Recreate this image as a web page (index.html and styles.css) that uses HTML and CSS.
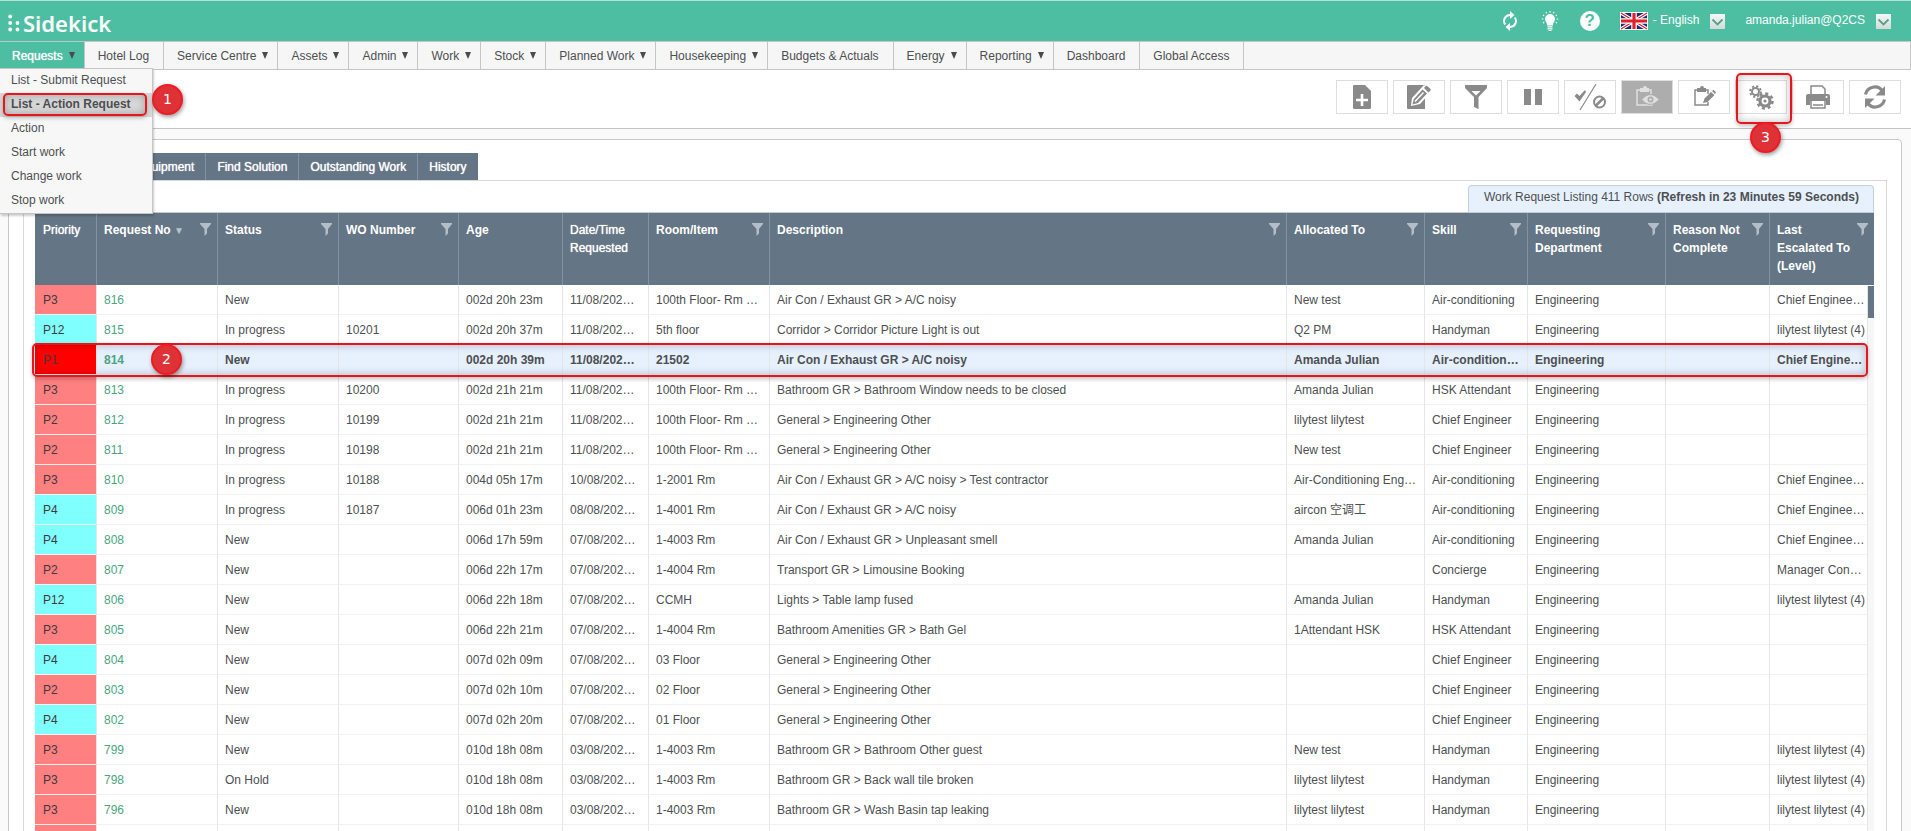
FILE: index.html
```html
<!DOCTYPE html>
<html lang="en">
<head>
    <meta charset="UTF-8">
    <meta name="viewport" content="width=device-width, initial-scale=1.0">
    <title>Sidekick</title>
    <link rel="stylesheet" href="styles.css">
</head>
<body>
    <!-- Shared icons -->
    <svg class="sprite" aria-hidden="true">
        <symbol id="i-filter" viewBox="0 0 11 13"><path d="M0 0h11v1L7 6v4.500L4.500 13V6L0 1z"/></symbol>
        <symbol id="i-chevron" viewBox="0 0 15 15"><path d="M2.500 5.500l5 5 5-5" fill="none" stroke="#5a9f8c" stroke-width="1.800"/></symbol>
    </svg>

    <header class="topbar">
        <a class="logo" href="#">
            <svg width="12" height="18" viewBox="0 0 12 18" fill="#fff"><circle cx="2.200" cy="2.500" r="1.900"/><circle cx="2.200" cy="9" r="1.900"/><circle cx="2.200" cy="15.500" r="1.900"/><circle cx="9.500" cy="9" r="1.900"/><circle cx="9.500" cy="15.500" r="1.900"/></svg>
            <span>Sidekick</span>
        </a>
        <div class="top-tools">
            <button class="top-icon" aria-label="Sync">
                <svg width="16" height="20" viewBox="0 0 16 20"><g fill="none" stroke="#fff" stroke-width="2"><path d="M9 4H8a6 6 0 0 0-4.800 9.500"/><path d="M7 16h1a6 6 0 0 0 4.800-9.500"/></g><path d="M8 0l4.500 4L8 8zM8 12v8l-4.500-4z" fill="#fff"/></svg>
            </button>
            <button class="top-icon" aria-label="Tips">
                <svg width="18" height="20" viewBox="0 0 18 20"><path d="M9 3a5 5 0 0 1 5 5c0 2.500-2 3.500-2.200 6.500H6.200C6 11.500 4 10.500 4 8a5 5 0 0 1 5-5zM6.500 15.300h5v1.200h-5zM6.500 17.200h5v1.200h-5zM7.500 19h3v1h-3z" fill="#fff"/><g stroke="#fff" stroke-width="1.200"><path d="M9 0v1.500M5 1l.7 1.300M13 1l-.7 1.300M2 4l1.200.8M16 4l-1.200.8M.8 8h1.500M15.700 8h1.500M2 12l1.200-.8M16 12l-1.200-.8"/></g></svg>
            </button>
            <button class="top-icon help" aria-label="Help">?</button>
            <button class="menu-button" aria-label="Language">
                <svg class="flag" width="28" height="18" viewBox="0 0 28 18"><path fill="#fff" d="M0 0h28v18H0z"/><path fill="#1d2f6f" d="M1 1h26v16H1z"/><path d="M1 1l26 16M27 1L1 17" stroke="#fff" stroke-width="3.400"/><path d="M1 1l26 16M27 1L1 17" stroke="#d8202f" stroke-width="1.200"/><path d="M14 1v16M1 9h26" stroke="#fff" stroke-width="5.500"/><path d="M14 1v16M1 9h26" stroke="#e0202c" stroke-width="3.200"/></svg>
                <span>- English</span>
                <svg class="chevron" width="15" height="15"><use href="#i-chevron"/></svg>
            </button>
            <button class="menu-button user">
                <span>amanda.julian@Q2CS</span>
                <svg class="chevron" width="15" height="15"><use href="#i-chevron"/></svg>
            </button>
        </div>
    </header>

    <nav class="mainnav">
        <div class="nav-item active">
            <a class="has-menu" href="#">Requests</a>
            <ul class="dropdown">
                <li><a href="#">List - Submit Request</a></li>
                <li class="current"><a href="#">List - Action Request</a><span class="marker"></span><span class="step">1</span></li>
                <li><a href="#">Action</a></li>
                <li><a href="#">Start work</a></li>
                <li><a href="#">Change work</a></li>
                <li><a href="#">Stop work</a></li>
            </ul>
        </div>
        <div class="nav-item"><a href="#">Hotel Log</a></div>
        <div class="nav-item"><a class="has-menu" href="#">Service Centre</a></div>
        <div class="nav-item"><a class="has-menu" href="#">Assets</a></div>
        <div class="nav-item"><a class="has-menu" href="#">Admin</a></div>
        <div class="nav-item"><a class="has-menu" href="#">Work</a></div>
        <div class="nav-item"><a class="has-menu" href="#">Stock</a></div>
        <div class="nav-item"><a class="has-menu" href="#">Planned Work</a></div>
        <div class="nav-item"><a class="has-menu" href="#">Housekeeping</a></div>
        <div class="nav-item"><a href="#">Budgets &amp; Actuals</a></div>
        <div class="nav-item"><a class="has-menu" href="#">Energy</a></div>
        <div class="nav-item"><a class="has-menu" href="#">Reporting</a></div>
        <div class="nav-item"><a href="#">Dashboard</a></div>
        <div class="nav-item"><a href="#">Global Access</a></div>
    </nav>

    <div class="toolbar">
        <button class="tool" aria-label="New request">
            <svg width="18" height="24" viewBox="0 0 18 24"><path d="M1 0h11l6 6v16.500a1.500 1.500 0 0 1-1.500 1.500h-15A1.500 1.500 0 0 1 0 22.500V1a1 1 0 0 1 1-1z"/><path d="M9 9v12M3 15h12" stroke="#fff" stroke-width="2.600"/></svg>
        </button>
        <button class="tool" aria-label="Edit request">
            <svg width="24" height="24" viewBox="0 0 24 24"><path d="M1 0h17v24H1a1 1 0 0 1-1-1V1a1 1 0 0 1 1-1z"/><path d="M4 21l1-8L17 0l8 6-12 13z" fill="#fff"/><path d="M5.500 19.500l1.200-5.300L15.500 4.500l4.500 4-9 9.500zM17 3l1.500-1.700a1.500 1.500 0 0 1 2 0l2.800 2.500a1.500 1.500 0 0 1 0 2L21.500 7.500z"/><path d="M8 16.500l8.500-9" stroke="#fff" stroke-width="1.500"/></svg>
        </button>
        <button class="tool" aria-label="Filter">
            <svg width="24" height="24" viewBox="0 0 24 24"><path d="M1 0h22v3l-8.500 9v12L10 22V12L1 3z"/><path d="M7.500 6h9L12 10.500z" fill="#fff"/></svg>
        </button>
        <button class="tool" aria-label="Pause">
            <svg width="18" height="16" viewBox="0 0 18 16"><path d="M0 0h7v16H0zM11 0h7v16h-7z"/></svg>
        </button>
        <button class="tool" aria-label="Complete or cancel">
            <svg width="34" height="28" viewBox="0 0 34 28"><path d="M1.500 13l2.500-2.500 2.500 2.500L12 7l1 2-6.500 9.500z"/><path d="M23 1L7 27" stroke="#8a8a8a" stroke-width="1.200"/><circle cx="26.500" cy="19" r="5.500" fill="none" stroke="#8a8a8a" stroke-width="2"/><path d="M22.500 23l8-8" stroke="#8a8a8a" stroke-width="2.500"/></svg>
        </button>
        <button class="tool off" aria-label="View job" disabled>
            <svg width="24" height="22" viewBox="0 0 24 22"><path d="M6 4H2v15h15v-3M13 4h3v4" fill="none" stroke="#e0e0e0" stroke-width="1.500"/><path d="M5 2h3a2 2 0 0 1 4 0h2v4H5z" fill="#e0e0e0"/><path d="M7 13.500c4.500-6.500 12-6.500 17 0-5 6.500-12.500 6.500-17 0z" fill="#e0e0e0" stroke="#adadad"/><circle cx="15.500" cy="13.500" r="3" fill="#adadad"/><circle cx="15.500" cy="13.500" r="1.300" fill="#e0e0e0"/></svg>
        </button>
        <button class="tool" aria-label="Edit job">
            <svg width="24" height="22" viewBox="0 0 24 22"><path d="M6 4H3v15h13v-3M13 4h3v4" fill="none" stroke="#8a8a8a" stroke-width="1.500"/><path d="M5 2h3a2 2 0 0 1 4 0h2v4H5zM11 17l1.500-4.500L19 6l3.500 3L15.500 16zM20 5l1.500-1.300 2.500 2.500L23 8z"/></svg>
        </button>
        <button class="tool" aria-label="Settings">
            <svg width="26" height="26" viewBox="0 0 26 26" fill="none" stroke="#8a8a8a"><circle cx="7.500" cy="7.500" r="3.500" stroke-width="2"/><circle cx="7.500" cy="7.500" r="5.300" stroke-width="2" stroke-dasharray="2.160 2"/><circle cx="17" cy="17" r="5" stroke-width="3.200"/><circle cx="17" cy="17" r="7.500" stroke-width="2.600" stroke-dasharray="3 2.890"/><circle cx="17" cy="17" r="1.600" stroke="none" fill="#8a8a8a"/></svg>
            <span class="marker"></span><span class="step">3</span>
        </button>
        <button class="tool" aria-label="Print">
            <svg width="24" height="24" viewBox="0 0 24 24"><path d="M5 9V1h11l3 3v5" fill="none" stroke="#8a8a8a" stroke-width="1.500"/><path d="M2 9h20a2 2 0 0 1 2 2v9h-4v-4H4v4H0v-9a2 2 0 0 1 2-2z"/><path d="M5 16v7h14v-7" fill="none" stroke="#8a8a8a" stroke-width="1.500"/><path d="M7 20h10" stroke="#8a8a8a" stroke-width="1.500"/><circle cx="20.500" cy="12" r="1" fill="#fff"/></svg>
        </button>
        <button class="tool" aria-label="Refresh">
            <svg width="24" height="24" viewBox="0 0 24 24"><path d="M2.500 9.500A9.500 9.500 0 0 1 19.500 6M21.500 14.500A9.500 9.500 0 0 1 4.500 18" fill="none" stroke="#8a8a8a" stroke-width="3.200"/><path d="M22 1v9.500h-9.500zM2 23v-9.500h9.500z"/></svg>
        </button>
    </div>

    <main class="workspace">
        <div class="tabs">
            <button class="tab">Equipment</button>
            <button class="tab">Find Solution</button>
            <button class="tab">Outstanding Work</button>
            <button class="tab">History</button>
        </div>
        <section class="tab-body">
            <p class="listing-note">Work Request Listing 411 Rows <b>(Refresh in 23 Minutes 59 Seconds)</b></p>
            <div class="grid-wrap">
                <table class="grid">
                    <colgroup>
                        <col class="w-priority"><col class="w-m"><col class="w-m"><col class="w-wo"><col class="w-s"><col class="w-date"><col class="w-m"><col><col class="w-l"><col class="w-skill"><col class="w-l"><col class="w-s"><col class="w-s">
                    </colgroup>
                    <thead>
                        <tr>
                            <th class="plain">Priority</th>
                            <th>Request No <span class="sort">▼</span><svg class="funnel"><use href="#i-filter"/></svg></th>
                            <th>Status<svg class="funnel"><use href="#i-filter"/></svg></th>
                            <th>WO Number<svg class="funnel"><use href="#i-filter"/></svg></th>
                            <th>Age</th>
                            <th class="plain">Date/Time Requested</th>
                            <th>Room/Item<svg class="funnel"><use href="#i-filter"/></svg></th>
                            <th>Description<svg class="funnel"><use href="#i-filter"/></svg></th>
                            <th>Allocated To<svg class="funnel"><use href="#i-filter"/></svg></th>
                            <th>Skill<svg class="funnel"><use href="#i-filter"/></svg></th>
                            <th>Requesting<br>Department<svg class="funnel"><use href="#i-filter"/></svg></th>
                            <th>Reason Not<br>Complete<svg class="funnel"><use href="#i-filter"/></svg></th>
                            <th>Last<br>Escalated To<br>(Level)<svg class="funnel"><use href="#i-filter"/></svg></th>
                        </tr>
                    </thead>
                    <tbody id="rows"></tbody>
                </table>
                <div class="scroll-track"><div class="scroll-thumb"></div></div>
            </div>
        </section>
    </main>

    <script src="app.js"></script>
</body>
</html>
```

FILE: styles.css
```css
* {
    box-sizing: border-box;
}
body {
    margin: 0;
    height: 100vh;
    overflow: hidden;
    background: #fafafa;
    color: #4d4f52;
    font-family: "Liberation Sans", Arial, "Noto Sans CJK SC", sans-serif;
    font-size: 12px;
    line-height: 18px;
}
a {
    color: inherit;
    text-decoration: none;
}
button {
    font: inherit;
    color: inherit;
    background: none;
    border: 0;
    padding: 0;
    cursor: pointer;
}
.sprite {
    position: absolute;
    width: 0;
    height: 0;
}

/* Top bar */
.topbar {
    display: flex;
    justify-content: space-between;
    height: 41px;
    padding: 0 20px 0 8px;
    border-top: 1px solid #b5e2d5;
    background: #4dbea2;
    color: #fff;
}
.logo {
    display: flex;
    align-items: center;
    gap: 3px;
    padding-top: 3px;
    font-family: "Noto Sans", sans-serif;
    font-size: 22px;
    font-weight: 600;
    line-height: 36px;
}
.top-tools {
    display: flex;
    align-items: center;
}
.top-icon {
    display: flex;
    align-items: center;
    justify-content: center;
    width: 20px;
    height: 20px;
    margin-right: 20px;
}
.help {
    border-radius: 50%;
    background: #fff;
    color: #4dbea2;
    font-size: 17px;
    font-weight: bold;
}
.menu-button {
    display: flex;
    align-items: center;
}
.menu-button span {
    padding-bottom: 2px;
}
.flag {
    margin-right: 5px;
}
.chevron {
    margin-left: 11px;
    background: linear-gradient(#f5f8f7, #cfdcd8);
}
.user {
    margin-left: 20px;
}

/* Main menu */
.mainnav {
    display: flex;
    height: 29px;
    border: 1px solid #c5c5c5;
    border-left: 0;
    background: #f6f6f6;
}
.nav-item {
    position: relative;
    border-right: 1px solid #c5c5c5;
}
.nav-item > a {
    display: flex;
    align-items: center;
    height: 27px;
    padding: 0 14px 0 13px;
}
.nav-item > .has-menu {
    padding-right: 9px;
}
.has-menu::after {
    content: "";
    margin-left: 6px;
    border: solid transparent;
    border-width: 7px 3px 0;
    border-top-color: #4a4a4a;
}
.nav-item.active > a {
    padding-left: 12px;
    background: #4dbea2;
    color: #fff;
    text-shadow: 0 0 1px #fff;
}
.dropdown {
    position: absolute;
    z-index: 5;
    top: 26px;
    left: 0;
    width: 153px;
    margin: 0;
    padding: 0;
    border: 1px solid #c5c5c5;
    border-left: 0;
    background: #f7f7f7;
    box-shadow: 1px 2px 2px rgba(0,0,0,0.2);
    list-style: none;
}
.dropdown li {
    position: relative;
    height: 24px;
    padding: 2px 0 0 11px;
}
.dropdown .current {
    background: #d8d8d8;
    font-weight: bold;
}

/* Numbered callouts */
.marker {
    position: absolute;
    z-index: 2;
    border: 2px solid #e8151c;
    border-radius: 5px;
    box-shadow: 0 2px 4px rgba(0,0,0,0.25), inset 0 0 8px rgba(0,0,0,0.25);
}
.step {
    position: absolute;
    z-index: 3;
    width: 31px;
    height: 31px;
    border: 2px solid #ed1c24;
    border-radius: 50%;
    background: #df3236;
    box-shadow: 1px 2px 4px rgba(0,0,0,0.4);
    color: #fff;
    font-family: "DejaVu Sans", sans-serif;
    font-size: 14px;
    font-weight: normal;
    line-height: 27px;
    text-align: center;
}
.dropdown .marker {
    inset: 0 5px 1px 3px;
}
.dropdown .step {
    top: -9px;
    left: 152px;
}

/* Toolbar */
.toolbar {
    display: flex;
    justify-content: flex-end;
    gap: 5px;
    padding: 10px 10px 14px;
    border-bottom: 1px solid #c4c4c4;
    background: #fff;
}
.tool {
    position: relative;
    display: flex;
    align-items: center;
    justify-content: center;
    width: 52px;
    height: 34px;
    border: 1px solid #dedede;
    background: #fff;
    fill: #8a8a8a;
}
.tool.off {
    background: #adadad;
}
.tool .marker {
    inset: -8px -6px -11px 0;
}
.tool .step {
    top: 41px;
    left: 14px;
}

/* Tabs and listing */
.workspace {
    margin: 10px 9px 0 8px;
    padding: 13px 14px 0;
    border: 1px solid #c9c9c9;
    border-radius: 4px;
    background: #fff;
}
.tabs {
    display: flex;
    padding-left: 103px;
}
.tab {
    height: 27px;
    padding: 0 11px;
    border-right: 1px solid #8492a0;
    background: #647585;
    color: #fff;
    text-shadow: 0 0 1px #fff;
}
.tab:last-child {
    border-right: 0;
}
.tab-body {
    padding: 4px 12px 0 11px;
    border: 1px solid #d8d8d8;
    border-bottom: 0;
}
.listing-note {
    width: fit-content;
    height: 27px;
    margin: 0 0 0 auto;
    padding: 2px 14px 0 15px;
    border: 1px solid #c3d0dc;
    border-bottom: 0;
    border-radius: 4px 4px 0 0;
    background: #e7f1fd;
}
.grid-wrap {
    position: relative;
    border-top: 1px solid #c3ccd4;
}
.grid {
    width: 100%;
    table-layout: fixed;
    border-collapse: separate;
    border-spacing: 0;
}
.w-priority { width: 62px; }
.w-m { width: 121px; }
.w-wo { width: 120px; }
.w-s { width: 104px; }
.w-date { width: 86px; }
.w-l { width: 138px; }
.w-skill { width: 103px; }
.grid th {
    position: relative;
    height: 72px;
    padding: 8px 0 0 7px;
    border-right: 1px solid #8492a0;
    background: #647585;
    color: #fff;
    text-align: left;
    vertical-align: top;
}
.grid th.plain {
    font-weight: normal;
    text-shadow: 0 0 1px #fff;
}
.grid th:first-child,
.grid td:first-child {
    padding-left: 8px;
}
.grid th:last-child,
.grid td:last-child {
    border-right: 0;
}
.sort {
    color: #b9c2ca;
    font-size: 10px;
    line-height: 12px;
}
.funnel {
    position: absolute;
    top: 10px;
    right: 6px;
    width: 11px;
    height: 13px;
    fill: #b4bec8;
}
.grid td {
    height: 30px;
    padding: 0 7px;
    border-right: 1px solid #e6e6e6;
    border-bottom: 1px solid #f2f2f2;
    overflow: hidden;
    white-space: nowrap;
}
.grid td:first-child {
    overflow: visible;
    color: #403a3c;
}
.grid tbody tr {
    position: relative;
}
.grid tr.selected {
    background: #e7f0fd;
    font-weight: bold;
}
.grid td.red { background: #ff8080; }
.grid td.cyan { background: #80ffff; }
.grid td.urgent { background: #ff0000; font-weight: normal; }
.grid td a {
    color: #4aa583;
}
.grid .marker {
    inset: -2px 6px -2px -3px;
}
.grid .step {
    top: -1px;
    left: 116px;
}
.scroll-track {
    position: absolute;
    z-index: 1;
    top: 73px;
    right: 0;
    bottom: 0;
    width: 7px;
    border-left: 1px solid #e6e6e6;
    background: #f7f7f7;
}
.scroll-thumb {
    height: 32px;
    background: #647585;
}
```

FILE: app.js
```js
// priority, number, status, WO, age, date, room, description, allocated, skill, escalated
const requests = [
    ['P3', '816', 'New', '', '002d 20h 23m', '11/08/202…', '100th Floor- Rm …', 'Air Con / Exhaust GR > A/C noisy', 'New test', 'Air-conditioning', 'Chief Enginee…'],
    ['P12', '815', 'In progress', '10201', '002d 20h 37m', '11/08/202…', '5th floor', 'Corridor > Corridor Picture Light is out', 'Q2 PM', 'Handyman', 'lilytest lilytest (4)'],
    ['P1', '814', 'New', '', '002d 20h 39m', '11/08/202…', '21502', 'Air Con / Exhaust GR > A/C noisy', 'Amanda Julian', 'Air-condition…', 'Chief Engine…'],
    ['P3', '813', 'In progress', '10200', '002d 21h 21m', '11/08/202…', '100th Floor- Rm …', 'Bathroom GR > Bathroom Window needs to be closed', 'Amanda Julian', 'HSK Attendant', ''],
    ['P2', '812', 'In progress', '10199', '002d 21h 21m', '11/08/202…', '100th Floor- Rm …', 'General > Engineering Other', 'lilytest lilytest', 'Chief Engineer', ''],
    ['P2', '811', 'In progress', '10198', '002d 21h 21m', '11/08/202…', '100th Floor- Rm …', 'General > Engineering Other', 'New test', 'Chief Engineer', ''],
    ['P3', '810', 'In progress', '10188', '004d 05h 17m', '10/08/202…', '1-2001 Rm', 'Air Con / Exhaust GR > A/C noisy > Test contractor', 'Air-Conditioning Eng…', 'Air-conditioning', 'Chief Enginee…'],
    ['P4', '809', 'In progress', '10187', '006d 01h 23m', '08/08/202…', '1-4001 Rm', 'Air Con / Exhaust GR > A/C noisy', 'aircon 空调工', 'Air-conditioning', 'Chief Enginee…'],
    ['P4', '808', 'New', '', '006d 17h 59m', '07/08/202…', '1-4003 Rm', 'Air Con / Exhaust GR > Unpleasant smell', 'Amanda Julian', 'Air-conditioning', 'Chief Enginee…'],
    ['P2', '807', 'New', '', '006d 22h 17m', '07/08/202…', '1-4004 Rm', 'Transport GR > Limousine Booking', '', 'Concierge', 'Manager Con…'],
    ['P12', '806', 'New', '', '006d 22h 18m', '07/08/202…', 'CCMH', 'Lights > Table lamp fused', 'Amanda Julian', 'Handyman', 'lilytest lilytest (4)'],
    ['P3', '805', 'New', '', '006d 22h 21m', '07/08/202…', '1-4004 Rm', 'Bathroom Amenities GR > Bath Gel', '1Attendant HSK', 'HSK Attendant', ''],
    ['P4', '804', 'New', '', '007d 02h 09m', '07/08/202…', '03 Floor', 'General > Engineering Other', '', 'Chief Engineer', ''],
    ['P2', '803', 'New', '', '007d 02h 10m', '07/08/202…', '02 Floor', 'General > Engineering Other', '', 'Chief Engineer', ''],
    ['P4', '802', 'New', '', '007d 02h 20m', '07/08/202…', '01 Floor', 'General > Engineering Other', '', 'Chief Engineer', ''],
    ['P3', '799', 'New', '', '010d 18h 08m', '03/08/202…', '1-4003 Rm', 'Bathroom GR > Bathroom Other guest', 'New test', 'Handyman', 'lilytest lilytest (4)'],
    ['P3', '798', 'On Hold', '', '010d 18h 08m', '03/08/202…', '1-4003 Rm', 'Bathroom GR > Back wall tile broken', 'lilytest lilytest', 'Handyman', 'lilytest lilytest (4)'],
    ['P3', '796', 'New', '', '010d 18h 08m', '03/08/202…', '1-4003 Rm', 'Bathroom GR > Wash Basin tap leaking', 'lilytest lilytest', 'Handyman', 'lilytest lilytest (4)']
];

const colours = { P1: 'urgent', P2: 'red', P3: 'red', P4: 'cyan', P12: 'cyan' };
const tbody = document.getElementById('rows');

function addCell(row, text) {
    const cell = row.insertCell();
    cell.textContent = text;
    return cell;
}

requests.forEach(request => {
    const [priority, number, ...rest] = request;
    const escalated = rest.pop();
    const row = tbody.insertRow();

    addCell(row, priority).className = colours[priority];

    const link = document.createElement('a');
    link.href = '#';
    link.textContent = number;
    row.insertCell().appendChild(link);

    rest.forEach(text => addCell(row, text));
    addCell(row, 'Engineering');
    addCell(row, '');
    addCell(row, escalated);

    if (number === '814') {
        row.className = 'selected';
        row.cells[0].insertAdjacentHTML('beforeend', '<span class="marker"></span><span class="step">2</span>');
    }
});

// Next row, cut off at the bottom edge
const next = tbody.insertRow();
addCell(next, '').className = 'red';
for (let i = 0; i < 12; i++) {
    addCell(next, '');
}
```
